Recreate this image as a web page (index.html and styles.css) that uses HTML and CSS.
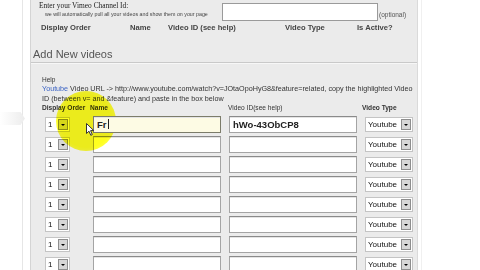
FILE: index.html
```html
<!DOCTYPE html>
<html lang="en">
<head>
    <meta charset="UTF-8">
    <title>Video Settings</title>
    <link rel="stylesheet" href="styles.css">
</head>
<body>
    <div class="page">
        <div class="gutter">
            <div class="gutter-line"></div>
            <div class="tab"></div>
        </div>

        <div class="panel">
            <div class="vimeo">
                <div class="vimeo-label">
                    <div class="vimeo-title">Enter your Vimeo Channel Id:</div>
                    <div class="vimeo-note">we will automatically pull all your videos and show them on your page</div>
                </div>
                <div class="vimeo-input"></div>
                <span class="optional">(optional)</span>
            </div>
            <div class="cols">
                <span class="c-order">Display Order</span>
                <span class="c-name">Name</span>
                <span class="c-id">Video ID (see help)</span>
                <span class="c-type">Video Type</span>
                <span class="c-active">Is Active?</span>
            </div>

            <h2>Add New videos</h2>

            <div class="add">
                <div class="help-title">Help</div>
                <p class="help">
                    <span class="link">Youtube</span> Video URL -&gt; http://www.youtube.com/watch?v=JOtaOpoHyG8&amp;feature=related, copy the highlighted Video<br>
                    ID (between v= and &amp;feature) and paste in the box below
                </p>

                <div class="grid head">
                    <span>Display Order</span>
                    <span class="h-name">Name</span>
                    <span class="h-id">Video ID(see help)</span>
                    <span class="h-type">Video Type</span>
                </div>

                <div class="grid row">
                    <div class="dd order"><span class="dd-val">1</span><span class="dd-btn"></span></div>
                    <div class="field active">Fr<span class="caret"></span></div>
                    <div class="field">hWo-43ObCP8</div>
                    <div class="dd type"><span class="dd-val">Youtube</span><span class="dd-btn"></span></div>
                </div>
                <div class="grid row">
                    <div class="dd order"><span class="dd-val">1</span><span class="dd-btn"></span></div>
                    <div class="field"></div>
                    <div class="field"></div>
                    <div class="dd type"><span class="dd-val">Youtube</span><span class="dd-btn"></span></div>
                </div>
                <div class="grid row">
                    <div class="dd order"><span class="dd-val">1</span><span class="dd-btn"></span></div>
                    <div class="field"></div>
                    <div class="field"></div>
                    <div class="dd type"><span class="dd-val">Youtube</span><span class="dd-btn"></span></div>
                </div>
                <div class="grid row">
                    <div class="dd order"><span class="dd-val">1</span><span class="dd-btn"></span></div>
                    <div class="field"></div>
                    <div class="field"></div>
                    <div class="dd type"><span class="dd-val">Youtube</span><span class="dd-btn"></span></div>
                </div>
                <div class="grid row">
                    <div class="dd order"><span class="dd-val">1</span><span class="dd-btn"></span></div>
                    <div class="field"></div>
                    <div class="field"></div>
                    <div class="dd type"><span class="dd-val">Youtube</span><span class="dd-btn"></span></div>
                </div>
                <div class="grid row">
                    <div class="dd order"><span class="dd-val">1</span><span class="dd-btn"></span></div>
                    <div class="field"></div>
                    <div class="field"></div>
                    <div class="dd type"><span class="dd-val">Youtube</span><span class="dd-btn"></span></div>
                </div>
                <div class="grid row">
                    <div class="dd order"><span class="dd-val">1</span><span class="dd-btn"></span></div>
                    <div class="field"></div>
                    <div class="field"></div>
                    <div class="dd type"><span class="dd-val">Youtube</span><span class="dd-btn"></span></div>
                </div>
                <div class="grid row">
                    <div class="dd order"><span class="dd-val">1</span><span class="dd-btn"></span></div>
                    <div class="field"></div>
                    <div class="field"></div>
                    <div class="dd type"><span class="dd-val">Youtube</span><span class="dd-btn"></span></div>
                </div>
            </div>
        </div>

        <div class="side"></div>
    </div>

    <!-- screen recorder click highlight -->
    <div class="spot"></div>
    <svg class="pointer" width="9" height="13" viewBox="0 0 9 13">
        <path d="M0.5 0.5 L0.5 10.5 L3 8.2 L4.8 12.3 L6.3 11.6 L4.6 7.6 L7.8 7.6 Z" fill="#fff" stroke="#333" stroke-width="1"/>
    </svg>
</body>
</html>
```

FILE: styles.css
```css
body {
    margin: 0;
    background: #fff;
    font-family: "Liberation Sans", Arial, sans-serif;
    color: #222;
    overflow: hidden;
}
.page {
    display: flex;
    height: 270px;
}
.gutter {
    width: 30px;
    position: relative;
}
.gutter-line {
    position: absolute;
    left: 22px;
    top: 0;
    bottom: 0;
    border-left: 1px solid #e6e6e6;
}
.tab {
    position: absolute;
    left: 0;
    top: 112px;
    width: 25px;
    height: 13px;
    background: linear-gradient(to right, #fff, #ececec);
    clip-path: polygon(0 0, 82% 0, 100% 50%, 82% 100%, 0 100%);
}
.panel {
    width: 386px;
    background: #ebebeb;
    border-left: 1px solid #d4d4d4;
    border-right: 1px solid #dadada;
}
.side {
    flex: 1;
    border-left: 3px solid #fff;
    box-shadow: inset 1px 0 0 #f0f0f0;
}

/* vimeo block */
.vimeo {
    display: flex;
    height: 22px;
    padding-left: 8px;
}
.vimeo-label {
    width: 183px;
}
.vimeo-title {
    font-family: "Liberation Serif", serif;
    font-size: 7.4px;
    line-height: 8px;
    margin-top: 2px;
    color: #222;
}
.vimeo-note {
    font-size: 5.3px;
    line-height: 8px;
    padding-left: 6px;
    color: #444;
}
.vimeo-input {
    width: 154px;
    height: 16px;
    margin-top: 3px;
    background: #fff;
    border: 1px solid #9a9a9a;
}
.optional {
    font-size: 6.5px;
    margin-top: 11px;
    margin-left: 1px;
    color: #555;
}
.cols {
    display: flex;
    height: 12px;
    line-height: 12px;
    font-size: 7.6px;
    font-weight: bold;
    color: #444;
    padding-left: 10px;
}
.c-order { width: 89px; }
.c-name { width: 38px; }
.c-id { width: 117px; }
.c-type { width: 72px; }

h2 {
    margin: 0;
    padding: 13px 0 1px 2px;
    font-size: 11px;
    line-height: 14px;
    font-weight: normal;
    color: #555;
    border-bottom: 1px solid #c9c9c9;
    box-shadow: 0 1px 0 #f7f7f7;
}

/* new videos */
.add {
    padding: 12px 0 0 11px;
}
.help-title {
    font-size: 6.5px;
    line-height: 9px;
    color: #333;
}
.help {
    margin: 0;
    font-size: 7.2px;
    line-height: 9.5px;
    color: #333;
    white-space: nowrap;
}
.link {
    color: #3b63c4;
}
.grid {
    display: grid;
    grid-template-columns: 51px 136px 136px 48px;
}
.head {
    font-size: 6.6px;
    font-weight: bold;
    line-height: 10px;
    color: #333;
    margin-bottom: 3px;
}
.h-name { margin-left: -3px; }
.h-id { margin-left: -1px; font-weight: normal; }
.h-type { margin-left: -3px; }

.row {
    height: 17px;
    margin-bottom: 3px;
    align-items: center;
}
.field {
    width: 123px;
    height: 15px;
    background: #fff;
    border: 1px solid #a4a4a4;
    border-top-color: #8a8a8a;
    box-shadow: inset 0 1px 0 #e4e4e4;
    font-size: 9.5px;
    font-weight: bold;
    line-height: 15px;
    padding-left: 3px;
}
.field.active {
    position: relative;
    z-index: 3;
    background: #fdfbe4;
    border-color: #7c7c6a;
}
.caret {
    display: inline-block;
    width: 1px;
    height: 10px;
    margin-left: 1px;
    background: #222;
    vertical-align: -1px;
}
.dd {
    display: flex;
    height: 15px;
    border: 1px solid #c4c4c4;
    background: #fff;
    box-sizing: border-box;
}
.dd.order {
    width: 25px;
    margin-left: 3px;
}
.dd.type {
    width: 48px;
}
.dd-val {
    flex: 1;
    overflow: hidden;
    white-space: nowrap;
    font-size: 8px;
    line-height: 13px;
    padding-left: 2px;
    color: #111;
}
.dd-btn {
    width: 10px;
    flex-shrink: 0;
    margin: 1px;
    background: #d6d6d6;
    border: 1px solid #8e8e8e;
    box-sizing: border-box;
    position: relative;
}
.dd-btn::after {
    content: "";
    position: absolute;
    left: 2px;
    top: 4px;
    border-left: 2px solid transparent;
    border-right: 2px solid transparent;
    border-top: 2px solid #000;
}

/* overlays */
.spot {
    position: absolute;
    left: 56px;
    top: 91px;
    width: 60px;
    height: 60px;
    border-radius: 50%;
    background: radial-gradient(circle, #ffff1e 62%, #ffff60 84%, rgba(255, 255, 255, 0) 100%);
    mix-blend-mode: multiply;
    z-index: 2;
    pointer-events: none;
}
.pointer {
    position: absolute;
    left: 86px;
    top: 123px;
    z-index: 4;
}
```
